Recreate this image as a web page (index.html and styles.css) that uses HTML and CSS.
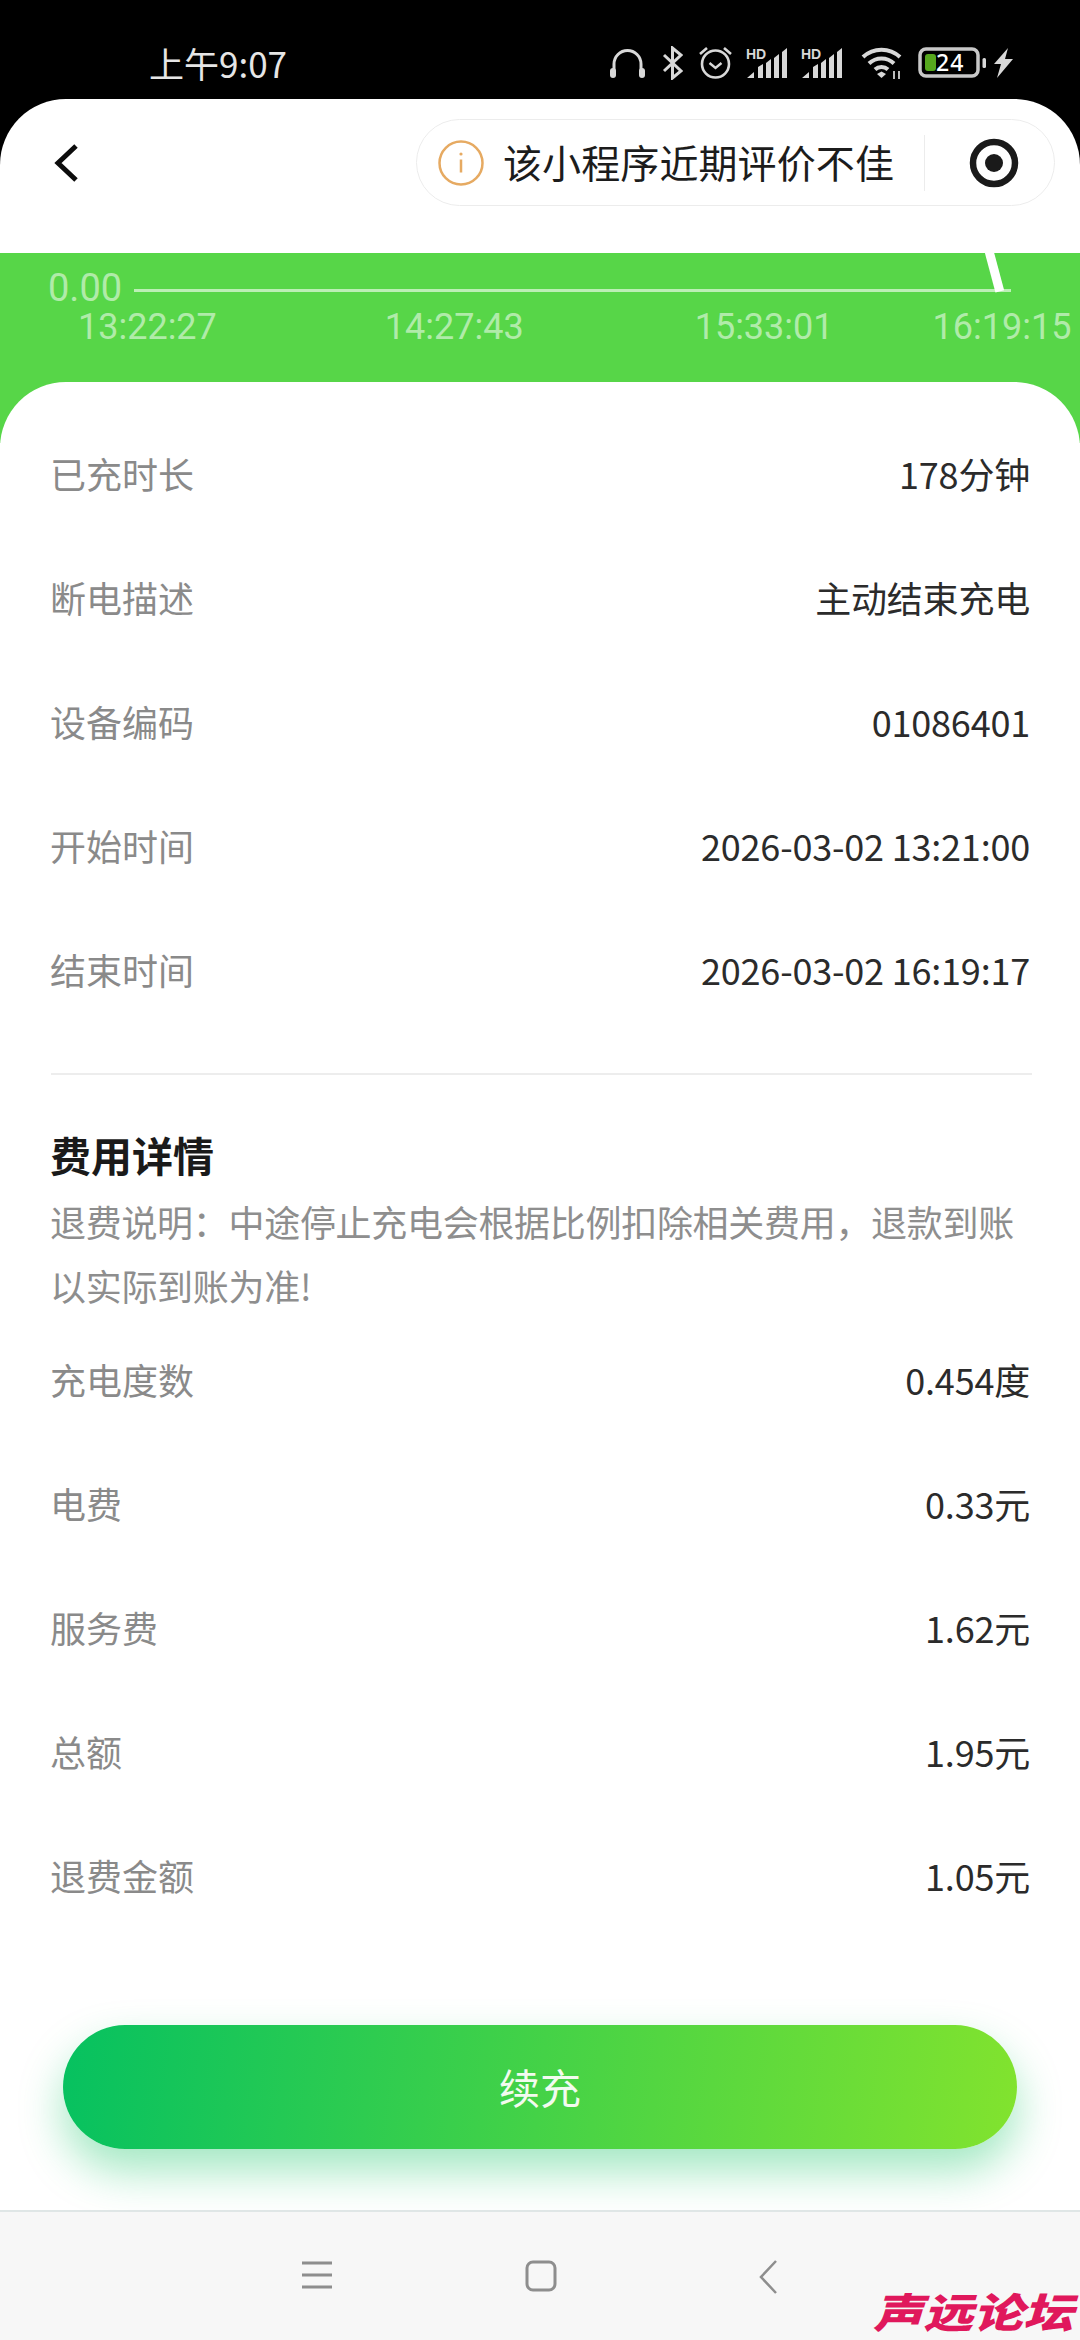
FILE: index.html
```html
<!DOCTYPE html>
<html lang="zh-CN">
  <head>
    <meta charset="UTF-8" />
    <title>充电详情</title>
    <link rel="stylesheet" href="styles.css">
  </head>
  <body>
    <div id="statusbar">
      <div class="clock">上午9:07</div>
      <div class="status-icons">
        <svg class="ico-phones" width="37" height="32" viewBox="0 0 37 32">
          <path d="M5 28V17a13.500 13.500 0 0 1 27 0v11" fill="none" stroke="#d8d8d8" stroke-width="3"/>
          <rect x="1" y="21" width="6" height="10" rx="3" fill="#d8d8d8"/>
          <rect x="30" y="21" width="6" height="10" rx="3" fill="#d8d8d8"/>
        </svg>
        <svg class="ico-bt" width="21" height="34" viewBox="0 0 21 34">
          <path d="M2 9l17 16-8.500 7V2l8.500 7L2 25" fill="none" stroke="#d8d8d8" stroke-width="3"/>
        </svg>
        <svg class="ico-alarm" width="35" height="34" viewBox="0 0 35 34">
          <circle cx="17.500" cy="18" r="13.500" fill="none" stroke="#d8d8d8" stroke-width="2.600"/>
          <path d="M11.500 17l6 5 6-5" fill="none" stroke="#d8d8d8" stroke-width="2.400"/>
          <path d="M2 8l7-6M33 8l-7-6" fill="none" stroke="#d8d8d8" stroke-width="2.600"/>
        </svg>
        <svg class="ico-signal" width="42" height="32" viewBox="0 0 42 32">
          <text x="0" y="12" class="hd">HD</text>
          <path d="M1 31l7-6v6zM12 31V20l5-3v14zM20 31V16l5-4v19zM28 31V11l5-4v24zM36 31V5l5-4v30z" fill="#d8d8d8"/>
        </svg>
        <svg class="ico-signal" width="42" height="32" viewBox="0 0 42 32">
          <text x="0" y="12" class="hd">HD</text>
          <path d="M1 31l7-6v6zM12 31V20l5-3v14zM20 31V16l5-4v19zM28 31V11l5-4v24zM36 31V5l5-4v30z" fill="#d8d8d8"/>
        </svg>
        <svg class="ico-wifi" width="42" height="34" viewBox="0 0 42 34">
          <path d="M2 11a27 27 0 0 1 37 0M8 17.500a18 18 0 0 1 25 0M14 23.500a9.500 9.500 0 0 1 13 0" fill="none" stroke="#d8d8d8" stroke-width="4"/>
          <path d="M20.500 32l-4.500-4 4.500-2.500 4.500 2.500z" fill="#d8d8d8"/>
          <path d="M33 25v8M38 25v8" stroke="#bbb" stroke-width="2"/>
        </svg>
        <svg class="ico-battery" width="69" height="32" viewBox="0 0 69 32">
          <rect x="2" y="2" width="58" height="27" rx="6" fill="none" stroke="#c8c8c8" stroke-width="3.500"/>
          <rect x="7" y="7" width="11" height="17" rx="3" fill="#56a81e"/>
          <rect x="64.500" y="11" width="3.500" height="10" rx="1.500" fill="#d8d8d8"/>
          <text x="18" y="24" class="batt">24</text>
        </svg>
        <svg class="ico-bolt" width="19" height="30" viewBox="0 0 19 30">
          <path d="M14 0L0 16h7l-4 14L19 11h-8z" fill="#d8d8d8"/>
        </svg>
      </div>
    </div>

    <div id="page">
      <div class="topbar">
        <svg class="back" width="28" height="40" viewBox="0 0 28 40">
          <path d="M24 3L6 20l18 17" fill="none" stroke="#0c0c0c" stroke-width="5"/>
        </svg>
        <div class="capsule">
          <svg width="46" height="46" viewBox="0 0 46 46">
            <circle cx="23" cy="23" r="21.500" fill="none" stroke="#e6aa62" stroke-width="2.500"/>
            <circle cx="23" cy="14" r="1.600" fill="#e6aa62"/>
            <path d="M23 19.500v13" stroke="#e6aa62" stroke-width="2.500"/>
          </svg>
          <span class="capsule-text">该小程序近期评价不佳</span>
          <i class="capsule-line"></i>
          <svg width="50" height="50" viewBox="0 0 50 50">
            <circle cx="25" cy="25" r="21" fill="none" stroke="#1a1a1a" stroke-width="6.500"/>
            <circle cx="25" cy="25" r="9" fill="#1a1a1a"/>
          </svg>
        </div>
      </div>

      <div class="chart">
        <div class="axis">
          <span class="zero">0.00</span>
          <i class="axis-line"></i>
        </div>
        <i class="spike"></i>
        <div class="ticks">
          <span>13:22:27</span>
          <span>14:27:43</span>
          <span>15:33:01</span>
          <span>16:19:15</span>
        </div>
      </div>

      <div class="card">
        <div class="row"><span class="key">已充时长</span><span class="val">178分钟</span></div>
        <div class="row"><span class="key">断电描述</span><span class="val">主动结束充电</span></div>
        <div class="row"><span class="key">设备编码</span><span class="val">01086401</span></div>
        <div class="row"><span class="key">开始时间</span><span class="val">2026-03-02 13:21:00</span></div>
        <div class="row"><span class="key">结束时间</span><span class="val">2026-03-02 16:19:17</span></div>

        <div class="divider"></div>

        <div class="title">费用详情</div>
        <div class="note">退费说明：中途停止充电会根据比例扣除相关费用，退款到账以实际到账为准!</div>

        <div class="row"><span class="key">充电度数</span><span class="val">0.454度</span></div>
        <div class="row"><span class="key">电费</span><span class="val">0.33元</span></div>
        <div class="row"><span class="key">服务费</span><span class="val">1.62元</span></div>
        <div class="row"><span class="key">总额</span><span class="val">1.95元</span></div>
        <div class="row"><span class="key">退费金额</span><span class="val">1.05元</span></div>

        <div class="recharge">续充</div>
      </div>
    </div>

    <div id="navbar">
      <svg width="32" height="30" viewBox="0 0 32 30">
        <path d="M1 3h30M1 15h30M1 27h30" stroke="#8e8e8e" stroke-width="3"/>
      </svg>
      <svg width="32" height="32" viewBox="0 0 32 32">
        <rect x="2" y="2" width="28" height="28" rx="6" fill="none" stroke="#8e8e8e" stroke-width="3"/>
      </svg>
      <svg width="20" height="34" viewBox="0 0 20 34">
        <path d="M18 1L3 17l15 16" fill="none" stroke="#8e8e8e" stroke-width="2.500"/>
      </svg>
      <div class="mark">声远论坛</div>
    </div>
  </body>
</html>
```

FILE: styles.css
```css
* {
  box-sizing: border-box;
}
body {
  margin: 0;
  width: 1080px;
  height: 2340px;
  overflow: hidden;
  background: #000;
  font-family: "Noto Sans CJK SC", "Noto Sans", sans-serif;
  color: #2b2b2b;
}
#statusbar {
  height: 99px;
  display: flex;
  align-items: center;
  justify-content: space-between;
  padding: 26px 67px 0 149px;
}
.clock {
  font-size: 35px;
  color: #e6e6e6;
  line-height: 40px;
}
.status-icons {
  display: flex;
  align-items: center;
  gap: 15px;
}
.ico-phones { margin-right: 1px; }
.ico-signal { margin-left: -2px; }
.ico-wifi { margin-left: 3px; }
.ico-bolt { margin-left: -8px; }
.hd {
  font: bold 14px "Liberation Sans", sans-serif;
  fill: #d8d8d8;
}
.batt {
  font: 500 23px "Noto Sans", sans-serif;
  letter-spacing: 1px;
  fill: #fff;
}

#page {
  background: #fff;
  border-radius: 66px 66px 0 0;
  height: 2111px;
  overflow: hidden;
}
.topbar {
  height: 154px;
  display: flex;
  align-items: flex-start;
  justify-content: space-between;
  padding: 20px 25px 0 52px;
}
.back {
  margin-top: 24px;
}
.capsule {
  width: 639px;
  height: 87px;
  border: 1px solid #ececec;
  border-radius: 44px;
  display: flex;
  align-items: center;
  padding-left: 21px;
}
.capsule-text {
  font-size: 39px;
  line-height: 46px;
  letter-spacing: 0.1px;
  margin: 0 0 3px 19px;
  color: #1c1c1c;
  white-space: nowrap;
}
.capsule-line {
  width: 1px;
  height: 56px;
  background: #ececec;
  margin-left: 30px;
  margin-right: 44px;
}

.chart {
  position: relative;
  height: 190px;
  background: #57d648;
  color: rgba(255, 255, 255, 0.55);
  font-family: Roboto, sans-serif;
  font-size: 36px;
  line-height: 42px;
}
.axis {
  display: flex;
  align-items: center;
  padding: 14px 0 0 48px;
}
.zero {
  width: 86px;
  font-size: 38px;
}
.axis-line {
  width: 877px;
  height: 3px;
  margin-top: 4px;
  background: rgba(255, 255, 255, 0.6);
}
.spike {
  position: absolute;
  left: 990px;
  top: -2px;
  width: 9px;
  height: 41px;
  background: #fff;
  transform: rotate(-15deg);
}
.ticks {
  display: flex;
  margin-top: -3px;
  padding-left: 78px;
}
.ticks span:nth-child(2) { margin-left: 168px; }
.ticks span:nth-child(3) { margin-left: 171px; }
.ticks span:nth-child(4) { margin-left: 99px; }

.card {
  margin-top: -61px;
  position: relative;
  background: #fff;
  border-radius: 66px 66px 0 0;
  padding: 32px 48px 0 50px;
}
.row {
  height: 124px;
  display: flex;
  align-items: center;
  justify-content: space-between;
  padding: 0 2px 6px 0;
  font-size: 36px;
  line-height: 50px;
}
.key {
  color: #8a8a8a;
}
.val {
  color: #2b2b2b;
  letter-spacing: -0.2px;
}
.divider {
  height: 2px;
  margin: 39px 0 0 1px;
  background: #ededed;
}
.title {
  margin-top: 51px;
  font-size: 41px;
  line-height: 56px;
  font-weight: 700;
  color: #1a1a1a;
}
.note {
  margin: 7px 0 3px;
  font-size: 36px;
  line-height: 64px;
  letter-spacing: -0.3px;
  color: #8e8e8e;
}
.recharge {
  margin: 85px 15px 0 13px;
  height: 124px;
  border-radius: 62px;
  background: linear-gradient(97deg, #06c160, #82e32e);
  box-shadow: 0 22px 44px rgba(10, 195, 95, 0.38);
  color: #f2fbef;
  font-size: 41px;
  padding-bottom: 2px;
  display: flex;
  align-items: center;
  justify-content: center;
}

#navbar {
  position: relative;
  height: 130px;
  background: #f7f7f7;
  border-top: 2px solid #dfe6e6;
  display: flex;
  align-items: flex-start;
  padding: 48px 0 0 301px;
  gap: 192px;
}
#navbar svg:last-of-type {
  margin-left: 9px;
}
.mark {
  position: absolute;
  right: 7px;
  bottom: 5px;
  font-size: 50px;
  line-height: 50px;
  font-weight: 900;
  font-style: italic;
  color: #e0185c;
  white-space: nowrap;
  transform: scaleY(0.82);
}
```
